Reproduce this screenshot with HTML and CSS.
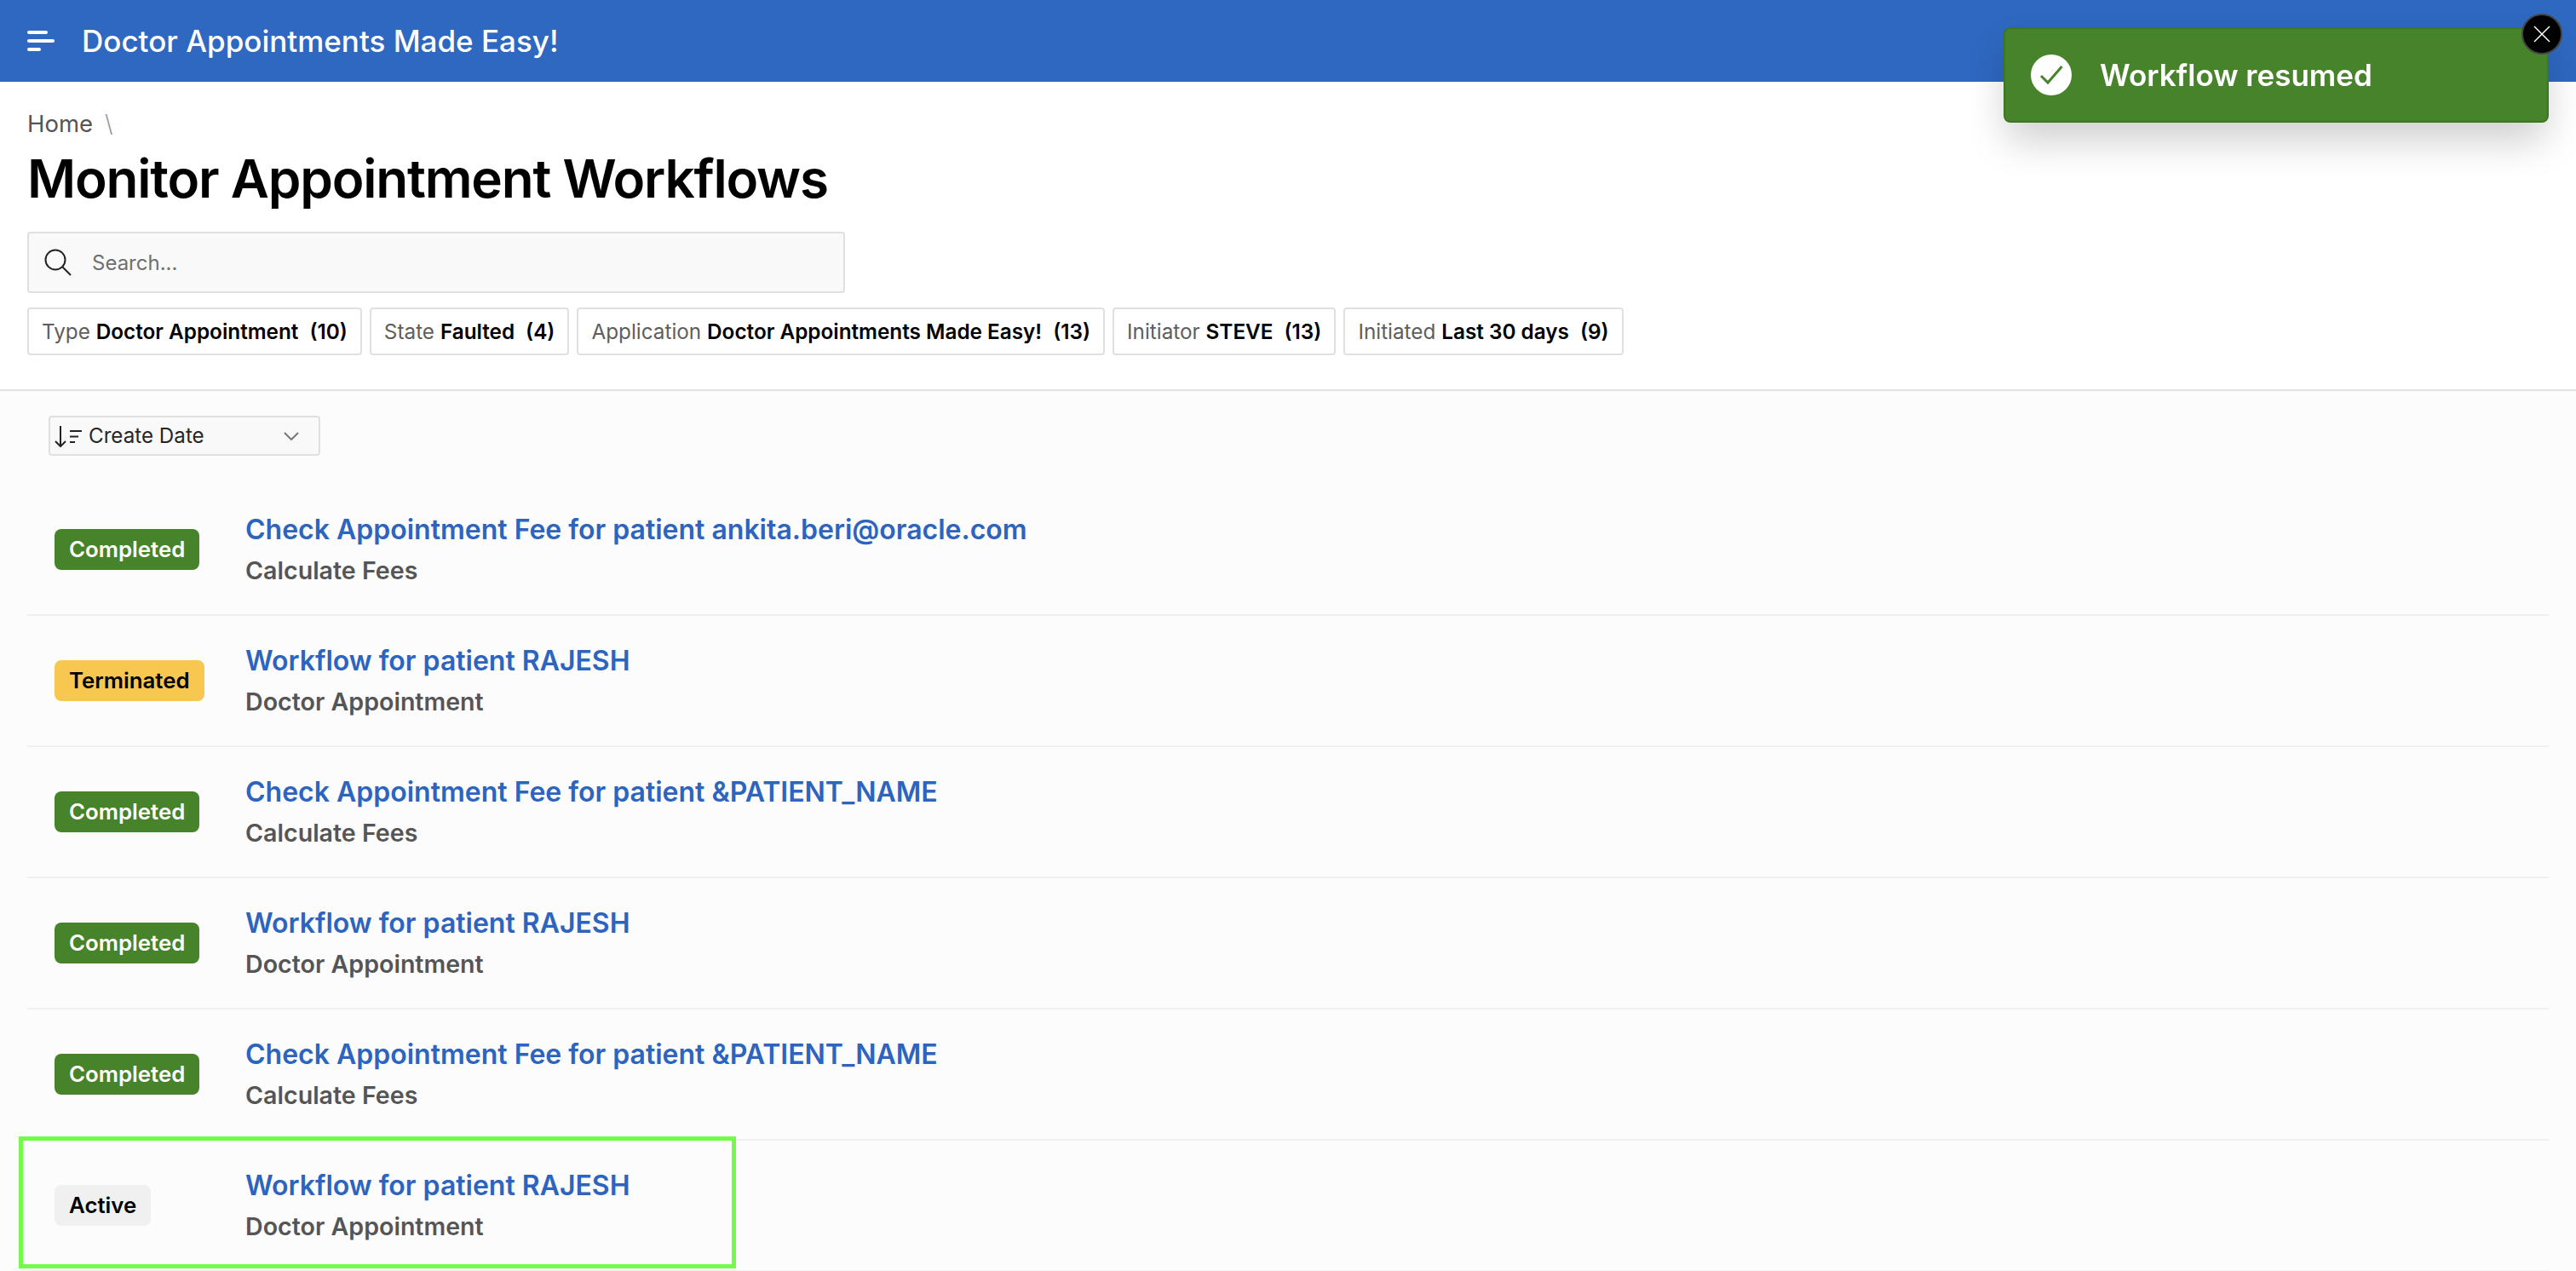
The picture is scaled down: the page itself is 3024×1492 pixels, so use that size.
FILE: index.html
```html
<!DOCTYPE html>
<html lang="en">
<head>
  <meta charset="UTF-8" />
  <meta name="viewport" content="width=device-width, initial-scale=1.0" />
  <title>Monitor Appointment Workflows</title>
  <link rel="stylesheet" href="styles.css">
</head>
<body>
  <header class="topbar">
    <svg class="menu-icon" width="32" height="24" viewBox="0 0 32 24">
      <rect x="0" y="0" width="24" height="4" rx="2" />
      <rect x="0" y="10" width="32" height="4" rx="2" />
      <rect x="0" y="20" width="16" height="4" rx="2" />
    </svg>
    <span class="app-name">Doctor Appointments Made Easy!</span>
  </header>

  <section class="page-head">
    <div class="breadcrumb"><span>Home</span><span class="crumb-sep">\</span></div>
    <h1>Monitor Appointment Workflows</h1>
    <div class="search-box">
      <svg width="32" height="32" viewBox="0 0 32 32" fill="none" stroke="#222" stroke-width="2">
        <circle cx="13" cy="13" r="11.5" />
        <path d="M21.5 21.5 L31 31" />
      </svg>
      <span class="placeholder">Search...</span>
    </div>
    <div class="chips">
      <div class="chip"><span class="chip-label">Type</span> <b>Doctor Appointment</b><b class="count">(10)</b></div>
      <div class="chip"><span class="chip-label">State</span> <b>Faulted</b><b class="count">(4)</b></div>
      <div class="chip"><span class="chip-label">Application</span> <b>Doctor Appointments Made Easy!</b><b class="count">(13)</b></div>
      <div class="chip"><span class="chip-label">Initiator</span> <b>STEVE</b><b class="count">(13)</b></div>
      <div class="chip"><span class="chip-label">Initiated</span> <b>Last 30 days</b><b class="count">(9)</b></div>
    </div>
  </section>

  <main class="results">
    <div class="sort-select">
      <svg width="34" height="26" viewBox="0 0 34 26" fill="none" stroke="#222" stroke-width="2">
        <path d="M8 1 V25 M2 19 L8 25 L14 19" />
        <path d="M19 7 H33 M19 13.5 H29 M19 20 H25" />
      </svg>
      <span class="sort-text">Create Date</span>
      <svg class="chevron" width="18" height="10" viewBox="0 0 18 10" fill="none" stroke="#777" stroke-width="2">
        <path d="M1 1 L9 9 L17 1" />
      </svg>
    </div>

    <ul class="workflow-list">
      <li class="workflow">
        <div class="badge-col"><span class="badge badge-done">Completed</span></div>
        <div>
          <a class="wf-title" href="#">Check Appointment Fee for patient ankita.beri@oracle.com</a>
          <div class="wf-type">Calculate Fees</div>
        </div>
      </li>
      <li class="workflow">
        <div class="badge-col"><span class="badge badge-term">Terminated</span></div>
        <div>
          <a class="wf-title" href="#">Workflow for patient RAJESH</a>
          <div class="wf-type">Doctor Appointment</div>
        </div>
      </li>
      <li class="workflow">
        <div class="badge-col"><span class="badge badge-done">Completed</span></div>
        <div>
          <a class="wf-title" href="#">Check Appointment Fee for patient &amp;PATIENT_NAME</a>
          <div class="wf-type">Calculate Fees</div>
        </div>
      </li>
      <li class="workflow">
        <div class="badge-col"><span class="badge badge-done">Completed</span></div>
        <div>
          <a class="wf-title" href="#">Workflow for patient RAJESH</a>
          <div class="wf-type">Doctor Appointment</div>
        </div>
      </li>
      <li class="workflow">
        <div class="badge-col"><span class="badge badge-done">Completed</span></div>
        <div>
          <a class="wf-title" href="#">Check Appointment Fee for patient &amp;PATIENT_NAME</a>
          <div class="wf-type">Calculate Fees</div>
        </div>
      </li>
      <li class="workflow">
        <div class="highlight"></div>
        <div class="badge-col"><span class="badge badge-active">Active</span></div>
        <div>
          <a class="wf-title" href="#">Workflow for patient RAJESH</a>
          <div class="wf-type">Doctor Appointment</div>
        </div>
      </li>
    </ul>
  </main>

  <div class="toast">
    <svg width="48" height="48" viewBox="0 0 48 48" fill="none">
      <circle cx="24" cy="24" r="24" fill="#fff" />
      <path d="M12 25 L20 33 L36.5 14" stroke="#47832a" stroke-width="3" />
    </svg>
    <span class="toast-text">Workflow resumed</span>
    <div class="toast-close">
      <svg width="20" height="20" viewBox="0 0 20 20" fill="none" stroke="#fff" stroke-width="1.5">
        <path d="M1 1 L19 19 M19 1 L1 19" />
      </svg>
    </div>
  </div>
</body>
</html>
```

FILE: styles.css
```css
* {
  box-sizing: border-box;
}
html, body {
  height: 100%;
}
body {
  margin: 0;
  overflow: hidden;
  background: #fff;
  color: #000;
  font-family: Inter, "Liberation Sans", sans-serif;
}

.topbar {
  display: flex;
  align-items: center;
  gap: 32px;
  height: 96px;
  padding-left: 32px;
  background: #2f68c0;
  color: #fff;
}
.menu-icon {
  fill: #fff;
}
.app-name {
  font-size: 35px;
  font-weight: 500;
}

.page-head {
  height: 363px;
  padding: 32px 32px 0;
  border-bottom: 2px solid #e2e2e2;
}
.breadcrumb {
  display: flex;
  gap: 14px;
  height: 34px;
  font-size: 27.5px;
  line-height: 34px;
  color: #555;
}
.crumb-sep {
  color: #999;
  font-weight: 300;
}
h1 {
  margin: 10px 0 0;
  font-size: 62px;
  font-weight: 600;
  line-height: 76px;
  letter-spacing: -1.2px;
}
.search-box {
  display: flex;
  align-items: center;
  gap: 24px;
  width: 960px;
  height: 72px;
  margin-top: 24px;
  padding-left: 18px;
  background: #f9f9f9;
  border: 2px solid #e0e0e0;
  border-radius: 4px;
}
.placeholder {
  font-size: 24px;
  color: #707070;
}
.chips {
  display: flex;
  gap: 9px;
  margin-top: 17px;
}
.chip {
  height: 56px;
  padding: 0 15px;
  border: 2px solid #e0e0e0;
  border-radius: 4px;
  font-size: 24.3px;
  line-height: 52px;
  white-space: nowrap;
}
.chip b {
  font-weight: 600;
}
.chip-label {
  color: #5e5e5e;
}
.count {
  margin-left: 13px;
}

.results {
  padding: 29px 32px 0;
  background: #fcfcfc;
  height: 1033px;
}
.sort-select {
  display: flex;
  align-items: center;
  width: 319px;
  height: 47px;
  margin-left: 25px;
  padding-left: 4px;
  background: #f9f9f9;
  border: 2px solid #e0e0e0;
  border-radius: 4px;
}
.sort-text {
  margin-left: 7px;
  font-size: 24.2px;
  color: #262626;
}
.chevron {
  margin-left: auto;
  margin-right: 23px;
}

.workflow-list {
  margin: 34px 0 0;
  padding: 0;
  list-style: none;
}
.workflow {
  position: relative;
  display: flex;
  align-items: center;
  height: 154px;
  border-bottom: 2px solid #f0f0f0;
}
.badge-col {
  flex: none;
  width: 256px;
  padding-left: 32px;
}
.badge {
  display: inline-block;
  height: 48px;
  padding: 0 17px;
  border-radius: 8px;
  font-size: 25.8px;
  font-weight: 600;
  line-height: 48px;
}
.badge-done {
  background: #47832a;
  color: #fff;
}
.badge-term {
  background: #f7c74f;
  color: #000;
}
.badge-active {
  background: #f0f0f0;
  color: #000;
}
.wf-title {
  display: block;
  font-size: 32px;
  font-weight: 600;
  line-height: 40px;
  color: #2c64bf;
  text-decoration: none;
}
.wf-type {
  margin-top: 10px;
  font-size: 28.6px;
  font-weight: 600;
  line-height: 36px;
  color: #555;
}
.highlight {
  position: absolute;
  left: -10px;
  top: -5px;
  width: 842px;
  height: 155px;
  border: 5px solid #75f94c;
}

.toast {
  position: fixed;
  top: 32px;
  left: 2352px;
  display: flex;
  align-items: center;
  width: 640px;
  height: 112px;
  padding-left: 30px;
  background: #47832a;
  border: 2px solid #3f7625;
  border-radius: 8px;
  box-shadow: 0 24px 48px -4px rgba(0, 0, 0, 0.2);
}
.toast-text {
  margin-left: 33px;
  font-size: 35px;
  font-weight: 600;
  color: #fff;
}
.toast-close {
  position: absolute;
  top: -18px;
  right: -18px;
  display: flex;
  align-items: center;
  justify-content: center;
  width: 48px;
  height: 48px;
  background: #000;
  border: 2px solid #444;
  border-radius: 50%;
}
```
